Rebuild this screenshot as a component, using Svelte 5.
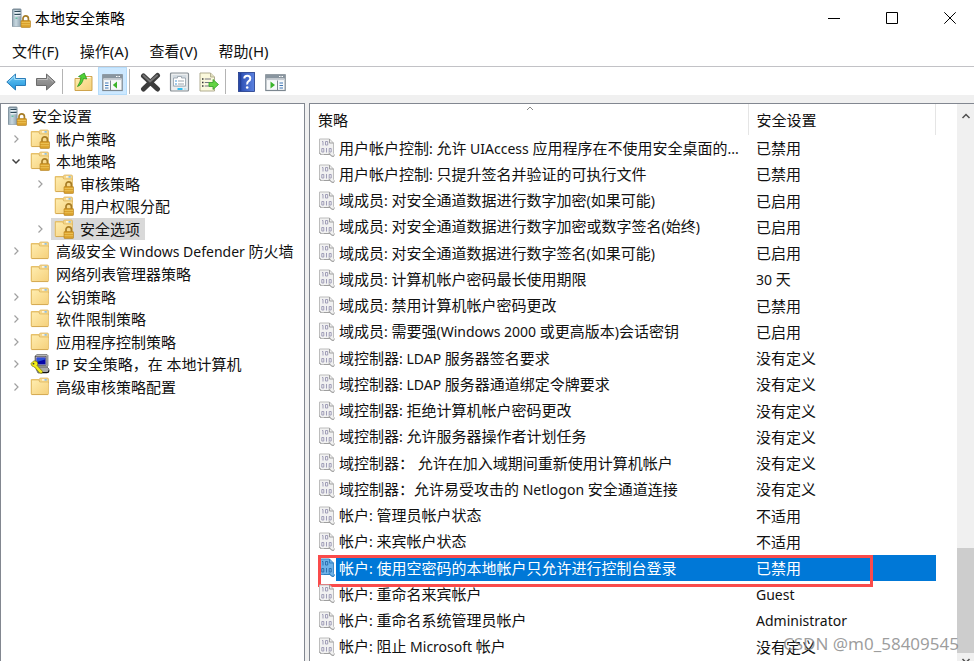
<script>
  const menus = ['文件(F)', '操作(A)', '查看(V)', '帮助(H)'];

  const tools = [
    { icon: 'back', label: '后退' },
    { icon: 'forward', label: '前进' },
    { icon: 'sep' },
    { icon: 'up', label: '向上' },
    { icon: 'tree', label: '显示控制台树', on: true },
    { icon: 'sep' },
    { icon: 'delete', label: '删除' },
    { icon: 'props', label: '属性' },
    { icon: 'export', label: '导出列表' },
    { icon: 'sep' },
    { icon: 'help', label: '帮助' },
    { icon: 'action', label: '显示操作窗格' }
  ];

  const tree = [
    { text: '安全设置', level: 0, icon: 'server' },
    { text: '帐户策略', level: 1, icon: 'locked', arrow: 'closed' },
    { text: '本地策略', level: 1, icon: 'locked', arrow: 'open' },
    { text: '审核策略', level: 2, icon: 'locked', arrow: 'closed' },
    { text: '用户权限分配', level: 2, icon: 'locked' },
    { text: '安全选项', level: 2, icon: 'locked', arrow: 'closed', selected: true },
    { text: '高级安全 Windows Defender 防火墙', level: 1, icon: 'folder', arrow: 'closed' },
    { text: '网络列表管理器策略', level: 1, icon: 'folder' },
    { text: '公钥策略', level: 1, icon: 'folder', arrow: 'closed' },
    { text: '软件限制策略', level: 1, icon: 'folder', arrow: 'closed' },
    { text: '应用程序控制策略', level: 1, icon: 'folder', arrow: 'closed' },
    { text: 'IP 安全策略，在 本地计算机', level: 1, icon: 'ipsec', arrow: 'closed' },
    { text: '高级审核策略配置', level: 1, icon: 'folder', arrow: 'closed' }
  ];

  const policies = [
    ['用户帐户控制: 允许 UIAccess 应用程序在不使用安全桌面的...', '已禁用'],
    ['用户帐户控制: 只提升签名并验证的可执行文件', '已禁用'],
    ['域成员: 对安全通道数据进行数字加密(如果可能)', '已启用'],
    ['域成员: 对安全通道数据进行数字加密或数字签名(始终)', '已启用'],
    ['域成员: 对安全通道数据进行数字签名(如果可能)', '已启用'],
    ['域成员: 计算机帐户密码最长使用期限', '30 天'],
    ['域成员: 禁用计算机帐户密码更改', '已禁用'],
    ['域成员: 需要强(Windows 2000 或更高版本)会话密钥', '已启用'],
    ['域控制器: LDAP 服务器签名要求', '没有定义'],
    ['域控制器: LDAP 服务器通道绑定令牌要求', '没有定义'],
    ['域控制器: 拒绝计算机帐户密码更改', '没有定义'],
    ['域控制器: 允许服务器操作者计划任务', '没有定义'],
    ['域控制器： 允许在加入域期间重新使用计算机帐户', '没有定义'],
    ['域控制器：允许易受攻击的 Netlogon 安全通道连接', '没有定义'],
    ['帐户: 管理员帐户状态', '不适用'],
    ['帐户: 来宾帐户状态', '不适用'],
    ['帐户: 使用空密码的本地帐户只允许进行控制台登录', '已禁用'],
    ['帐户: 重命名来宾帐户', 'Guest'],
    ['帐户: 重命名系统管理员帐户', 'Administrator'],
    ['帐户: 阻止 Microsoft 帐户', '没有定义']
  ];
  const selectedPolicy = 16;

  // Latin runs are set one pixel smaller than the Chinese text around them.
  const runs = (text) => text.match(/[\x20-\x7e]+|[^\x20-\x7e]+/g) ?? [];
  const isLatin = (run) => run.charCodeAt(0) < 127;
</script>

{#snippet label(text)}{#each runs(text) as run}{#if isLatin(run)}<span class="latin">{run}</span>{:else}{run}{/if}{/each}{/snippet}

{#snippet lock()}
  <path d="M12 13.500V10.500a2.700 2.700 0 0 1 5.400 0V13.500" fill="none" stroke="#a67c26" stroke-width="1.700" />
  <rect x="10" y="12.500" width="9.500" height="7" rx=".8" fill="#d9a02c" stroke="#b3801f" stroke-width=".6" />
  <path d="M10.500 14.500h8.500M10.500 16.700h8.500" stroke="#efc75c" stroke-width=".8" />
{/snippet}

{#snippet folder()}
  <path d="M.7 3q0-1 1-1H9v15.500H1.500q-.8 0-.8-.8z" fill="#ecc671" />
  <path d="M9.500 4.500V2.200q0-1.200 1.200-1.200H17.300q1.200 0 1.200 1.200V6H9.500z" fill="#f6d78a" stroke="#d9b05a" stroke-width=".7" />
  <path d="M12 2.300h4.500v1.200H12z" fill="#fff" /><path d="M14.500 2.300h2.200v1.200h-2.200z" fill="#5fa9e2" />
  <path d="M1.500 3H8q1 0 1.300 1l.4 1H18.500V16.800q0 .8-.8.8H1.500z" fill="url(#folderFill)" stroke="#ddb45b" stroke-width=".7" />
  <path d="M2 17.500h16" stroke="#d4a850" stroke-width=".9" />
{/snippet}

{#snippet server()}
  <path d="M1 1.500L2.500.5H9.500l1 1V18.800H1z" fill="#7f909c" />
  <path d="M1.800 2h8v16.300h-8z" fill="url(#serverFill)" />
  <path d="M3.500 3.500h6M3.500 6.500h6" stroke="#2f4a5a" stroke-width="1.200" />
  <path d="M3.500 4.700h6M3.500 7.700h6" stroke="#f2f8fb" stroke-width="1" />
  <rect x="4.500" y="9.500" width="2" height="1.500" fill="#65c4a3" />
  {@render lock()}
{/snippet}

{#snippet treeIcon(kind)}
  <svg class="tree-icon" width="20" height="20" viewBox="0 0 20 20" aria-hidden="true">
    {#if kind === 'server'}
      {@render server()}
    {:else if kind === 'ipsec'}
      <path d="M5 2l2-1.500h10l1 1V12l-2 2H5z" fill="#b5b5b5" stroke="#555" stroke-width=".6" />
      <rect x="5.500" y="2.500" width="10.500" height="9" fill="#d6d6d6" stroke="#444" stroke-width=".6" />
      <rect x="6.500" y="3.500" width="9" height="7" fill="#0606a8" />
      <path d="M7 4h8v1.500L7 8z" fill="#2b50d8" />
      <path d="M6 15l2-2h9l2 2v2.500l-2 1.500H8z" fill="#a9a9a9" stroke="#333" stroke-width=".6" />
      <path d="M12 18.500h6l1-2" fill="none" stroke="#111" stroke-width="1.200" />
      <path d="M.8 9.500L4 6.800l3 .7 1 2.500-1 1.500 5.500 5.800-.5 2-2.300-.3L4.500 13 2 12z" fill="#f4ee18" stroke="#6b6600" stroke-width=".6" />
      <circle cx="3.500" cy="9.700" r=".9" fill="#444" />
    {:else}
      {@render folder()}
      {#if kind === 'locked'}{@render lock()}{/if}
    {/if}
  </svg>
{/snippet}

{#snippet toolIcon(kind)}
  <svg width="21" height="20" viewBox="0 0 21 20" aria-hidden="true">
    {#if kind === 'back'}
      <path d="M.8 10L9.500 2v4.500H19.500v7H9.500V18z" fill="url(#blueFill)" stroke="#2b7cb8" stroke-width="1" stroke-linejoin="round" />
      <path d="M2.500 9.800L8.700 4v3.500h10" fill="none" stroke="#a8e0fb" stroke-width="1" />
    {:else if kind === 'forward'}
      <path d="M20.200 10L11.500 2v4.500H1.500v7h10V18z" fill="url(#greyFill)" stroke="#6c6c6c" stroke-width="1" stroke-linejoin="round" />
      <path d="M2.500 7.500h10V4.500l5.500 5" fill="none" stroke="#bdbdbd" stroke-width="1" />
    {:else if kind === 'up'}
      <path d="M2 6.500V18.500h17V4.500h-7L10.500 6.500z" fill="url(#folderFill)" stroke="#c99c40" stroke-width=".9" />
      <path d="M13.500 5.500h4" stroke="#fff" stroke-width="1.200" />
      <path d="M4.500 14.500Q9 13 10.500 6.500L13.800 7 11.300 1 5.500 4.500l2.500 1Q7.500 10 4.500 14.500z" fill="#4fd136" stroke="#258d1c" stroke-width=".7" />
    {:else if kind === 'tree' || kind === 'action'}
      <rect x=".8" y="2.800" width="19.400" height="15.700" fill="#f7f9fa" stroke="#7c8790" stroke-width="1.200" />
      <path d="M1 3h19v3.500H1z" fill="#89959f" />
      <path d="M14 4.500h1.500M16.500 4.500H18" stroke="#fff" />
      <path d="M1 7.500h19" stroke="#c6ccd2" stroke-width="1.200" />
      {#if kind === 'tree'}
        <path d="M8.500 8.500v10" stroke="#7c8790" />
        <path d="M3 11h3.500M3 13.500h3.500M3 16h3.500" stroke="#3f76b5" stroke-width="1.200" />
        <path d="M15 9.500v7L10.800 13z" fill="#3cb52b" />
      {:else}
        <path d="M12.500 8.500v10" stroke="#7c8790" />
        <path d="M14.500 11H18M14.500 13.500H18M14.500 16H18" stroke="#3f76b5" stroke-width="1.200" />
        <path d="M5.500 9.500v7l4.500-3.500z" fill="#3cb52b" />
      {/if}
    {:else if kind === 'delete'}
      <path d="M3.500 4L17.500 17M17.500 3.500L3.500 17" stroke="#3c3c3c" stroke-width="5" stroke-linecap="round" />
      <path d="M3.500 3.500L10 9.500l7-6" fill="none" stroke="#747474" stroke-width="2" stroke-linecap="round" />
    {:else if kind === 'props'}
      <rect x="1.500" y="1" width="18" height="18" rx="1" fill="#eceeef" stroke="#858d93" stroke-width="1.200" />
      <rect x="3.500" y="3" width="14" height="12" fill="#d3dbe1" />
      <path d="M4.500 6h4V4.500h4V6h4v8h-12z" fill="#fff" stroke="#929ca6" stroke-width=".8" />
      <path d="M6 9h2M6 12h2" stroke="#4698d6" stroke-width="1.200" /><path d="M9 9h6M9 12h6" stroke="#9aa3ab" />
      <path d="M8.500 17h5" stroke="#32bff0" stroke-width="2" /><path d="M15 17h2.500" stroke="#9bd9ef" />
    {:else if kind === 'export'}
      <path d="M2 1h10.500l4 4v14H2z" fill="#fbf9dc" stroke="#a8a487" stroke-width=".9" />
      <path d="M12.500 1v4h4" fill="#e1dfbe" stroke="#a8a487" stroke-width=".8" />
      <path d="M4 7h1.500M4 10.500h1.500M4 14h1.500" stroke="#333" stroke-width="1.300" />
      <path d="M6.800 7H13M6.800 10.500H11M6.800 14H11" stroke="#777682" stroke-width="1.200" />
      <path d="M11 10.500h4V7.500l5.500 5-5.500 5v-3h-4z" fill="#63d444" stroke="#319d28" stroke-width=".8" />
    {:else if kind === 'help'}
      <rect x="2.500" y=".5" width="16" height="19" fill="url(#helpFill)" stroke="#1f3988" stroke-width=".8" />
      <path d="M4.500 1v18" stroke="#223f96" stroke-width="1.500" />
      <path d="M8.300 6.500Q8.300 3.800 11.300 3.800t3 2.700q0 1.700-1.700 2.700T11.200 12.500" fill="none" stroke="#fff" stroke-width="2" />
      <circle cx="11.200" cy="15.500" r="1.300" fill="#fff" />
    {/if}
  </svg>
{/snippet}

{#snippet policyIcon()}
  <svg class="policy-icon" width="18" height="20" viewBox="0 0 18 20" aria-hidden="true">
    <path class="page" d="M1.500 1H11.500L15.500 5V15.500q1.300 1.200.8 2.300-1.300 1.200-2.800.2L12 16.500H3.500q-2 0-2-2z" />
    <path class="edge" d="M11.500 1V5h4M1.500 14.500q0 2 2 2M12 16.500q0-1.500-1.500-1.500M6 16.500h6l2 1.800h2" />
    <path class="bits" d="M4 3.500h1V7.500M3.800 10.500h2v3.500h-2zM8.500 10v4.500M11.200 10.500h2v3.500h-2zM7.500 3.500h2.200v3.500H7.500z" />
  </svg>
{/snippet}

<svg class="defs" width="0" height="0" aria-hidden="true">
  <defs>
    <linearGradient id="folderFill" x1="0" y1="0" x2="1" y2="1"><stop stop-color="#ffedb0" /><stop offset="1" stop-color="#f5d07a" /></linearGradient>
    <linearGradient id="serverFill"><stop stop-color="#9fb2be" /><stop offset=".4" stop-color="#c8d8e0" /><stop offset="1" stop-color="#8fa3b0" /></linearGradient>
    <linearGradient id="blueFill" x1="0" y1="0" x2="0" y2="1"><stop stop-color="#72ccf5" /><stop offset="1" stop-color="#1d93dc" /></linearGradient>
    <linearGradient id="greyFill" x1="0" y1="0" x2="0" y2="1"><stop stop-color="#a5a5a5" /><stop offset="1" stop-color="#7c7c7c" /></linearGradient>
    <linearGradient id="helpFill"><stop stop-color="#2749ae" /><stop offset="1" stop-color="#5b82e0" /></linearGradient>
  </defs>
</svg>

<div class="window">
  <header class="title-bar">
    <svg width="20" height="20" viewBox="0 0 20 20" aria-hidden="true">{@render server()}</svg>
    <h1>本地安全策略</h1>
    <div class="controls">
      <button aria-label="最小化"><svg width="12" height="12" viewBox="0 0 12 12"><path d="M0 6.500h12" /></svg></button>
      <button aria-label="最大化"><svg width="12" height="12" viewBox="0 0 12 12"><path d="M.5.5h11v11H.5z" /></svg></button>
      <button aria-label="关闭"><svg width="12" height="12" viewBox="0 0 12 12"><path d="M.3.3l11.400 11.400M11.700.3L.3 11.700" /></svg></button>
    </div>
  </header>

  <nav class="menu-bar">
    {#each menus as menu}<button>{menu}</button>{/each}
  </nav>

  <div class="tool-bar" role="toolbar" aria-label="工具栏">
    {#each tools as tool}
      {#if tool.icon === 'sep'}
        <span class="sep"></span>
      {:else}
        <button class:on={tool.on} aria-label={tool.label}>{@render toolIcon(tool.icon)}</button>
      {/if}
    {/each}
  </div>

  <main>
    <section class="tree-pane">
      <ul role="tree">
        {#each tree as node}
          <li class="level-{node.level}" role="treeitem" aria-selected={!!node.selected}>
            {#if node.level > 0}
              <span class="expander">
                {#if node.arrow}
                  <button class={node.arrow} aria-label="展开或折叠">
                    <svg width="10" height="10" viewBox="0 0 10 10"><path d={node.arrow === 'open' ? 'M1.500 3.500L5 7l3.500-3.500' : 'M3.500 1.500L7 5 3.500 8.500'} /></svg>
                  </button>
                {/if}
              </span>
            {/if}
            <span class="node" class:selected={node.selected}>
              {@render treeIcon(node.icon)}
              <span>{@render label(node.text)}</span>
            </span>
          </li>
        {/each}
      </ul>
    </section>

    <section class="list-pane">
      <div class="list">
        <table>
          <thead>
            <tr>
              <th class="name" aria-sort="ascending">
                策略
                <svg class="sort" width="8" height="5" viewBox="0 0 8 5" aria-hidden="true"><path d="M1 4l3-3 3 3" /></svg>
              </th>
              <th class="setting">安全设置</th>
            </tr>
          </thead>
          <tbody>
            {#each policies as [name, setting], i}
              <tr class:selected={i === selectedPolicy}>
                <td class="name">
                  <div class="entry">
                    {@render policyIcon()}
                    <span>{@render label(name)}</span>
                  </div>
                  {#if i === selectedPolicy}<span class="marker"></span>{/if}
                </td>
                <td class="setting">{@render label(setting)}</td>
              </tr>
            {/each}
          </tbody>
        </table>
      </div>
      <div class="scrollbar">
        <button aria-label="向上滚动"><svg width="10" height="8" viewBox="0 0 10 8"><path d="M1.500 6L5 2.500 8.500 6" /></svg></button>
        <div class="thumb"></div>
        <button class="down" aria-label="向下滚动"><svg width="10" height="8" viewBox="0 0 10 8"><path d="M1.500 2L5 5.500 8.500 2" /></svg></button>
      </div>
    </section>
  </main>

  <p class="watermark">CSDN @m0_58409545</p>
</div>

<style>
  :global(body) { margin: 0; }

  .defs { position: absolute; }

  .window {
    position: relative;
    display: flex;
    flex-direction: column;
    height: 100vh;
    overflow: hidden;
    background: #fff;
    color: #111;
    font-family: "Noto Sans", "Noto Sans CJK SC", sans-serif;
    font-size: 15px;
    line-height: 22px;
  }

  .latin { font-size: 14px; }

  button {
    margin: 0;
    padding: 0;
    border: 0;
    background: none;
    color: inherit;
    font: inherit;
  }

  svg { display: block; flex: none; }

  .title-bar {
    display: flex;
    align-items: center;
    height: 36px;
    padding-left: 11px;
  }

  h1 {
    flex: 1;
    margin: 0 0 0 4px;
    color: #000;
    font-size: 15px;
    font-weight: 400;
  }

  .controls { display: flex; gap: 10px; }

  .controls button {
    display: grid;
    place-items: center;
    width: 48px;
    height: 36px;
  }

  .controls path { fill: none; stroke: #000; }

  .menu-bar {
    display: flex;
    align-items: center;
    gap: 21px;
    height: 30px;
    padding-left: 12px;
    border-bottom: 1px solid #c2c2c6;
  }

  .tool-bar {
    display: flex;
    align-items: center;
    height: 28px;
    padding-left: 2px;
  }

  .tool-bar button {
    display: grid;
    place-items: center;
    width: 29px;
    height: 28px;
    box-sizing: border-box;
  }

  .tool-bar button svg { margin-top: 2px; }

  .tool-bar button.on { border: 1px solid #b5dcfa; background: #cce8ff; }

  .sep {
    width: 1px;
    height: 25px;
    margin: 0 6px 0 2px;
    background: #b4b4b4;
  }

  main {
    display: flex;
    flex: 1;
    gap: 4px;
    min-height: 0;
    padding-top: 8px;
    background: #f0f0f0;
  }

  .tree-pane,
  .list-pane {
    box-sizing: border-box;
    border: 1px solid #828790;
    border-bottom: 0;
    background: #fff;
    overflow: hidden;
  }

  .tree-pane { flex: none; width: 305px; }

  .list-pane { display: flex; flex: 1; border-right: 0; }

  ul {
    display: grid;
    grid-auto-rows: 1fr;
    height: 293px;
    margin: 0;
    padding: 1px 0 0 5px;
    list-style: none;
    white-space: nowrap;
  }

  li { display: flex; min-height: 0; }

  .level-2 { padding-left: 24px; }

  .expander {
    display: grid;
    place-items: center;
    width: 20px;
    margin-right: 1px;
  }

  .expander path { fill: none; stroke: #a0a0a0; stroke-width: 1.2; }
  .expander .open path { stroke: #404040; stroke-width: 1.5; }

  .node {
    display: flex;
    align-items: center;
    gap: 5px;
    padding: 0 5px 0 1px;
  }

  .expander + .node { gap: 6px; padding-left: 3px; }

  .node.selected { background: #d9d9d9; }

  .list { flex: 1; min-width: 0; overflow: hidden; }

  table {
    width: 626px;
    height: 556px;
    border-collapse: collapse;
    table-layout: fixed;
  }

  th {
    position: relative;
    height: 31px;
    padding: 0 0 0 8px;
    border-right: 1px solid #e5e5e5;
    box-sizing: border-box;
    font-weight: 400;
    text-align: left;
  }

  th.name { width: 438px; }

  .sort { position: absolute; top: 2px; left: 216px; }
  .sort path { fill: none; stroke: #888; }

  td { padding: 0 0 0 8px; white-space: nowrap; }

  tbody tr { position: relative; }

  .entry { display: flex; align-items: center; gap: 3px; }

  .page { fill: #f1f1f1; stroke: #bdbdbd; }
  .edge { fill: none; stroke: #9f9f9f; }
  .bits { fill: none; stroke: #a09eb8; stroke-width: 1; }

  tr.selected td { background: #0078d7; color: #fff; }
  tr.selected td.name { background: linear-gradient(to right, #fff 26px, #0078d7 26px); }
  tr.selected .page { fill: #6fb3e8; stroke: #3d8ccb; }
  tr.selected .edge { stroke: #2f7fc0; }
  tr.selected .bits { stroke: #2c6fb0; }

  .marker {
    position: absolute;
    top: 0;
    left: 8px;
    width: 555px;
    height: 32px;
    box-sizing: border-box;
    border: 3px solid #fa4b4b;
  }

  .scrollbar {
    display: flex;
    flex: none;
    flex-direction: column;
    width: 17px;
    background: #f0f0f0;
  }

  .scrollbar button { display: grid; place-items: center; height: 24px; }
  .scrollbar path { fill: none; stroke: #505050; stroke-width: 1.5; }

  .thumb { height: 105px; margin-top: auto; background: #cdcdcd; }

  .scrollbar button.down { height: 8px; align-items: start; padding-top: 4px; overflow: hidden; }

  .watermark {
    position: absolute;
    right: 15px;
    bottom: 5px;
    margin: 0;
    color: rgba(125, 125, 125, 0.75);
    font-size: 17px;
    line-height: 24px;
  }
</style>
